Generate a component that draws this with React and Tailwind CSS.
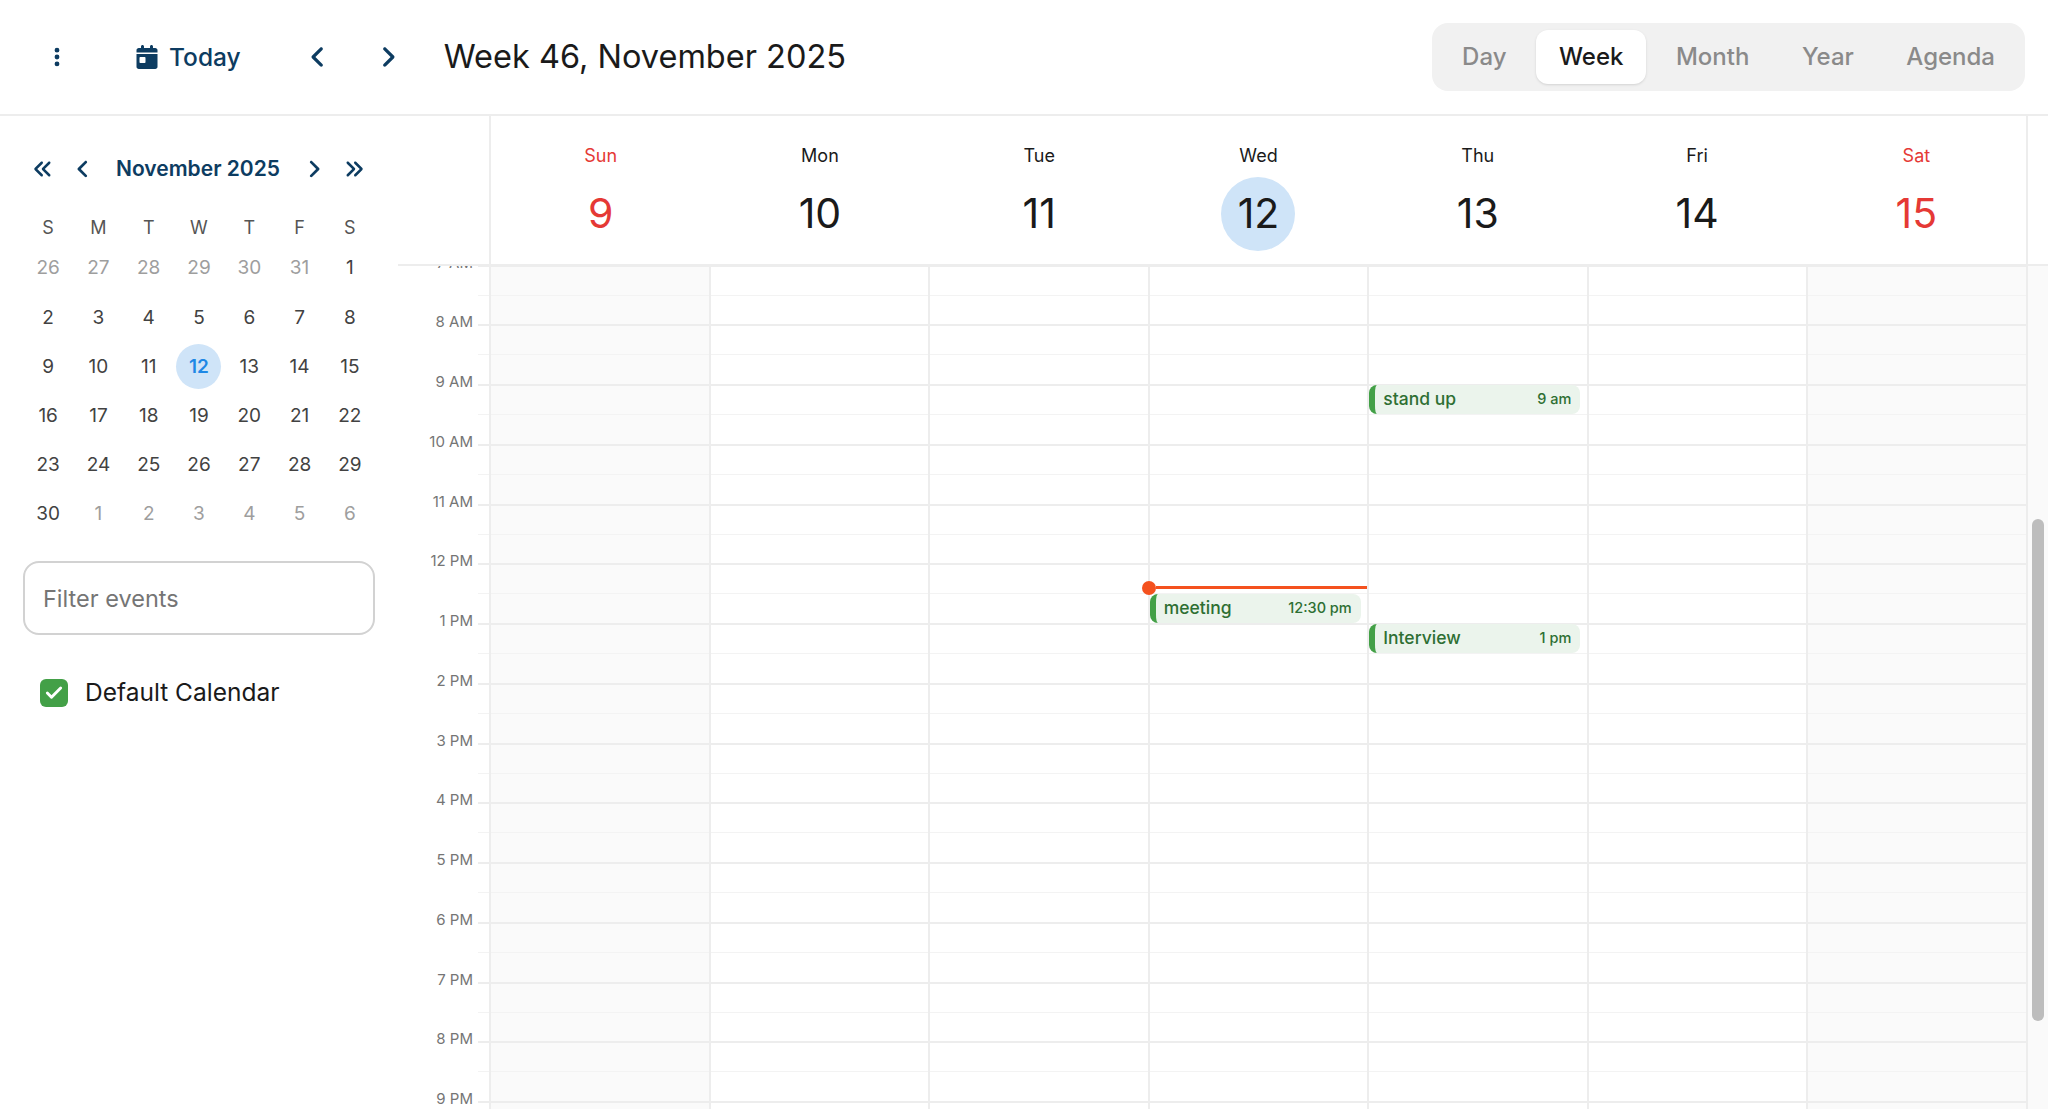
import {
  FaAngleLeft,
  FaAngleRight,
  FaAnglesLeft,
  FaAnglesRight,
  FaCalendarDay,
  FaEllipsisVertical,
} from "react-icons/fa6";
import { Check } from "lucide-react";

const views = ["Day", "Week", "Month", "Year", "Agenda"];

const weekDays = [
  { label: "Sun", date: 9, weekend: true },
  { label: "Mon", date: 10 },
  { label: "Tue", date: 11 },
  { label: "Wed", date: 12, today: true },
  { label: "Thu", date: 13 },
  { label: "Fri", date: 14 },
  { label: "Sat", date: 15, weekend: true },
];

const hours = [
  "7 AM", "8 AM", "9 AM", "10 AM", "11 AM", "12 PM", "1 PM", "2 PM",
  "3 PM", "4 PM", "5 PM", "6 PM", "7 PM", "8 PM", "9 PM",
];

const monthGrid = [
  [26, 27, 28, 29, 30, 31, 1],
  [2, 3, 4, 5, 6, 7, 8],
  [9, 10, 11, 12, 13, 14, 15],
  [16, 17, 18, 19, 20, 21, 22],
  [23, 24, 25, 26, 27, 28, 29],
  [30, 1, 2, 3, 4, 5, 6],
];

const HOUR_HEIGHT = 59.75;

const events = {
  3: [{ title: "meeting", time: "12:30 pm", start: 5.5 }],
  4: [
    { title: "stand up", time: "9 am", start: 2 },
    { title: "Interview", time: "1 pm", start: 6 },
  ],
};

function isOutside(rowIndex, date) {
  return (rowIndex === 0 && date > 7) || (rowIndex === 5 && date < 20);
}

function TopBar() {
  return (
    <header className="flex h-[116px] items-center border-b-2 border-[#ededed] pl-[46px] pr-[23px]">
      <FaEllipsisVertical size={22} className="w-[22px] text-[#0d3c61]" />
      <button className="ml-[67px] flex items-center gap-[10px] text-[#0d3c61]">
        <FaCalendarDay size={24} />
        <span className="text-[24.5px] font-medium">Today</span>
      </button>
      <FaAngleLeft size={26} className="ml-[65px] w-[24px] text-[#0d3c61]" />
      <FaAngleRight size={26} className="ml-[46px] w-[24px] text-[#0d3c61]" />
      <h1 className="ml-[44px] text-[32.5px] text-[#1a1a1a]">
        Week 46, November 2025
      </h1>
      <div className="ml-auto flex h-[68px] items-center gap-[6.5px] rounded-2xl bg-[#f1f1f1] px-[7px]">
        {views.map((view) =>
          view === "Week" ? (
            <div
              key={view}
              className="flex h-[54px] items-center rounded-xl bg-white px-[23px] text-[24px] font-medium text-[#1a1a1a] shadow-sm"
            >
              {view}
            </div>
          ) : (
            <div
              key={view}
              className="flex h-[54px] items-center px-[23px] text-[24px] font-medium text-[#8a8a8a]"
            >
              {view}
            </div>
          )
        )}
      </div>
    </header>
  );
}

function MiniCalendar() {
  return (
    <div>
      <div className="flex h-[24px] items-center pl-[33px] text-[#0d3c61]">
        <FaAnglesLeft size={20} />
        <FaAngleLeft size={22} className="ml-[19px]" />
        <span className="ml-[22px] text-[21px] font-semibold">November 2025</span>
        <FaAngleRight size={22} className="ml-[23px]" />
        <FaAnglesRight size={20} className="ml-[19px]" />
      </div>
      <div className="mt-[34px] grid grid-cols-7 pl-[23px] pr-[23px]">
        {["S", "M", "T", "W", "T", "F", "S"].map((d, i) => (
          <div
            key={i}
            className="flex h-[24px] items-center justify-center text-[18px] text-[#555555]"
          >
            {d}
          </div>
        ))}
      </div>
      <div className="mt-[5px] grid grid-cols-7 pl-[23px] pr-[23px]">
        {monthGrid.map((row, r) =>
          row.map((date, c) => (
            <div key={`${r}-${c}`} className="flex h-[49.2px] items-center justify-center">
              {date === 12 ? (
                <span className="flex h-[45px] w-[45px] items-center justify-center rounded-full bg-[#cfe4f8] text-[19px] font-semibold text-[#1e88e5]">
                  {date}
                </span>
              ) : (
                <span
                  className={
                    isOutside(r, date)
                      ? "text-[19px] text-[#9e9e9e]"
                      : "text-[19px] text-[#424242]"
                  }
                >
                  {date}
                </span>
              )}
            </div>
          ))
        )}
      </div>
    </div>
  );
}

function Sidebar() {
  return (
    <aside className="w-[398px] shrink-0 pt-[41px]">
      <MiniCalendar />
      <div className="mx-[23px] mt-[22px] flex h-[74px] w-[352px] items-center rounded-2xl border-2 border-[#d2d2d2] px-[18px] text-[23.5px] text-[#757575]">
        Filter events
      </div>
      <label className="ml-[40px] mt-[39px] flex items-center gap-[17px]">
        <span className="flex h-[28px] w-[28px] items-center justify-center rounded-md bg-[#43a047]">
          <Check size={20} strokeWidth={3.5} className="text-white" />
        </span>
        <span className="text-[24.5px] text-[#1a1a1a]">Default Calendar</span>
      </label>
    </aside>
  );
}

function DayHeader({ day }) {
  const color = day.weekend ? "text-[#e53935]" : "text-[#1a1a1a]";
  return (
    <div className="flex flex-col items-center pt-[26px]">
      <div className={`h-[28px] text-[18px] leading-[28px] ${color}`}>
        {day.label}
      </div>
      <div
        className={
          day.today
            ? `mt-[7px] flex h-[74px] w-[74px] items-center justify-center rounded-full bg-[#cfe4f8] text-[41px] ${color}`
            : `mt-[7px] flex h-[74px] w-[74px] items-center justify-center text-[41px] ${color}`
        }
      >
        {day.date}
      </div>
    </div>
  );
}

function EventChip({ event }) {
  return (
    <div
      className="absolute left-0 flex h-[29px] w-[211px] items-center justify-between rounded-lg border-l-[6px] border-[#43a047] bg-[#ebf4ec] pb-[2px] pl-[8px] pr-[9px] text-[#2e6f33]"
      style={{ top: event.start * HOUR_HEIGHT + 1 }}
    >
      <span className="text-[17.5px] font-medium">{event.title}</span>
      <span className="text-[14.5px] font-medium">{event.time}</span>
    </div>
  );
}

function DayColumn({ day, index }) {
  const bg = day.weekend ? "bg-[#fafafa]" : "bg-white";
  return (
    <div className={`relative border-l-2 border-[#ededed] ${bg}`}>
      {hours.map((hour) => (
        <div key={hour} className="h-[59.75px]">
          <div className="h-1/2 border-t-2 border-[#ededed]" />
          <div className="h-1/2 border-t border-[#f3f3f3]" />
        </div>
      ))}
      {(events[index] || []).map((event) => (
        <EventChip key={event.title} event={event} />
      ))}
      {index === 3 && (
        <div
          className="absolute left-0 right-0 z-10 flex items-center"
          style={{ top: 323 - 7 }}
        >
          <div className="-ml-[8px] h-[14px] w-[14px] shrink-0 rounded-full bg-[#f4511e]" />
          <div className="h-[3px] flex-1 bg-[#f4511e]" />
        </div>
      )}
    </div>
  );
}

function TimeGutter() {
  return (
    <div className="w-[91px] shrink-0">
      {hours.map((hour) => (
        <div key={hour} className="flex h-[59.75px] justify-end">
          <span className="-mt-[12px] h-[20px] whitespace-nowrap pr-[5px] text-[15px] leading-[20px] text-[#757575]">
            {hour}
          </span>
          <div className="w-[11px] shrink-0">
            <div className="h-1/2 border-t-2 border-[#ededed]" />
            <div className="h-1/2 border-t border-[#f3f3f3]" />
          </div>
        </div>
      ))}
    </div>
  );
}

function WeekView() {
  return (
    <main className="flex min-w-0 flex-1 flex-col">
      <div className="flex h-[150px] shrink-0 border-b-2 border-[#ededed]">
        <div className="w-[91px] shrink-0" />
        <div className="grid w-[1539px] shrink-0 grid-cols-7 border-x-2 border-[#ededed]">
          {weekDays.map((day) => (
            <DayHeader key={day.label} day={day} />
          ))}
        </div>
      </div>
      <div className="flex min-h-0 flex-1 overflow-hidden">
        <div className="-mt-[1.3px] flex">
          <TimeGutter />
          <div className="grid w-[1539px] shrink-0 grid-cols-7 border-r-2 border-[#ededed]">
            {weekDays.map((day, i) => (
              <DayColumn key={day.label} day={day} index={i} />
            ))}
          </div>
        </div>
        <div className="flex-1 bg-[#fafafa] pl-[4px] pt-[253px]">
          <div className="h-[502px] w-[12px] rounded-full bg-[#bdbdbd]" />
        </div>
      </div>
    </main>
  );
}

export default function App() {
  return (
    <div className="flex h-screen flex-col overflow-hidden bg-white font-['Inter','Liberation_Sans',sans-serif]">
      <TopBar />
      <div className="flex min-h-0 flex-1">
        <Sidebar />
        <WeekView />
      </div>
    </div>
  );
}
